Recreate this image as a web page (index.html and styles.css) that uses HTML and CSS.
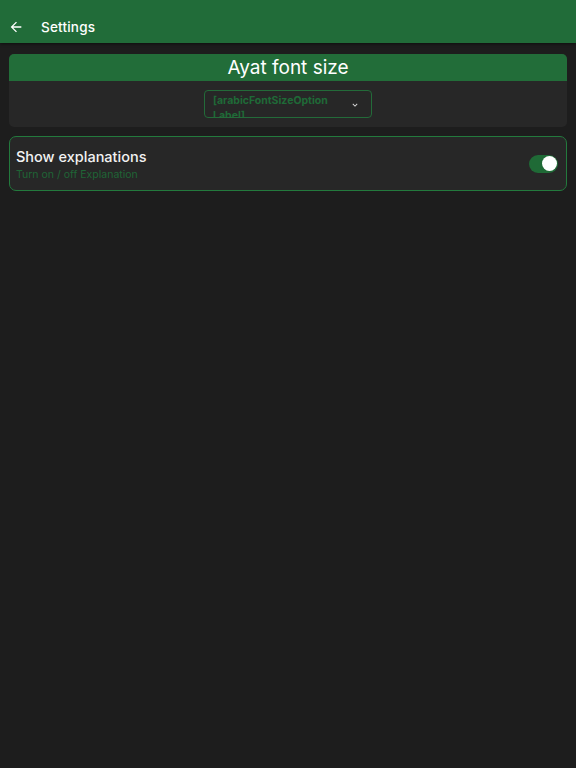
FILE: index.html
```html
<!DOCTYPE html>
<html>
<head>
<meta charset="utf-8">
<link rel="stylesheet" href="styles.css">
</head>
<body>
<header class="appbar">
  <svg class="back" width="16" height="16" viewBox="0 0 24 24"><path d="M20 11H7.83l5.59-5.59L12 4l-8 8 8 8 1.41-1.41L7.83 13H20v-2z" fill="#ffffff"/></svg>
  <span class="title">Settings</span>
</header>
<main class="content">
  <section class="card font-card">
    <div class="card-head">Ayat font size</div>
    <div class="card-body">
      <div class="dropdown">
        <span class="dd-text">[arabicFontSizeOption Label]</span>
        <svg class="chev" width="10" height="10" viewBox="0 0 24 24"><path d="M7.41 8.59 12 13.17l4.59-4.58L18 10l-6 6-6-6z" fill="#e0e0e0"/></svg>
      </div>
    </div>
  </section>
  <section class="card toggle-card">
    <div class="texts">
      <div class="t-title">Show explanations</div>
      <div class="t-sub">Turn on / off Explanation</div>
    </div>
    <div class="switch"><div class="thumb"></div></div>
  </section>
</main>
</body>
</html>
```
FILE: styles.css
```css
* { box-sizing: border-box; }
html, body { margin: 0; padding: 0; }
body {
  background: #1d1d1d;
  font-family: "Inter", "Noto Sans", sans-serif;
  width: 576px;
  height: 768px;
  color: #ffffff;
}
.appbar {
  height: 43px;
  background: #216c39;
  display: flex;
  align-items: center;
  padding-left: 8px;
  padding-top: 11px;
  box-shadow: 0 1px 3px rgba(0,0,0,0.5);
}
.back { margin-right: 17px; }
.title {
  font-size: 13.5px;
  font-weight: 500;
  letter-spacing: 0.2px;
}
.content {
  padding: 11px 9px;
  display: flex;
  flex-direction: column;
  gap: 9px;
}
.card {
  background: #272727;
  border-radius: 5px;
}
.font-card { overflow: hidden; height: 73px; }
.card-head {
  background: #226d39;
  height: 27px;
  text-align: center;
  font-size: 19px;
  line-height: 27px;
  font-weight: 400;
}
.card-body {
  display: flex;
  justify-content: center;
  padding-top: 9px;
}
.dropdown {
  width: 168px;
  height: 28px;
  border: 1px solid #236b39;
  border-radius: 4px;
  display: flex;
  align-items: flex-start;
  padding: 2px 11px 0 8px;
  overflow: hidden;
}
.dd-text {
  flex: 1;
  font-size: 10.5px;
  font-weight: 700;
  line-height: 15px;
  color: #1f6a37;
  width: 120px;
}
.chev { margin-top: 7px; }
.toggle-card {
  height: 55px;
  border: 1.5px solid #237a3d;
  border-radius: 7px;
  display: flex;
  align-items: center;
  padding: 0 8px 0 6px;
}
.texts { flex: 1; padding-top: 3px; }
.t-title {
  font-size: 14.5px;
  font-weight: 500;
  color: #f2f2f2;
  line-height: 18px;
}
.t-sub {
  font-size: 10.5px;
  color: #1f6536;
  line-height: 16px;
  margin-top: 1px;
}
.switch {
  width: 29px;
  height: 18px;
  border-radius: 9px;
  background: #1f6a36;
  position: relative;
}
.thumb {
  position: absolute;
  width: 15px;
  height: 15px;
  border-radius: 50%;
  background: #ffffff;
  right: 1px;
  top: 1.5px;
}
```
